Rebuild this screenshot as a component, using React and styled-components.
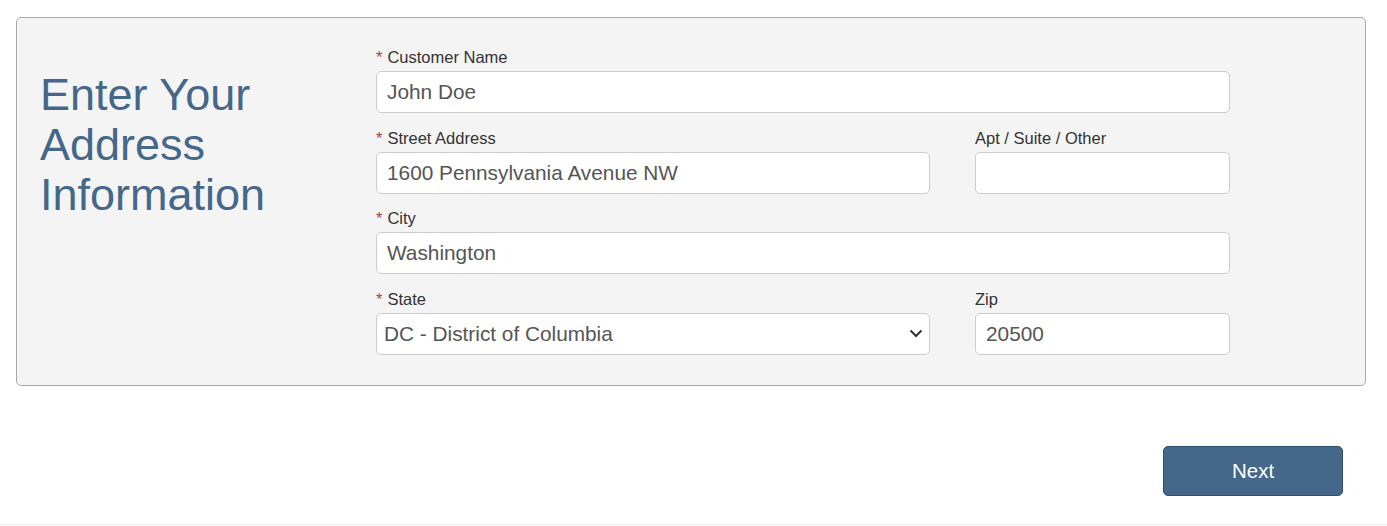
import React from "react";
import styled, { createGlobalStyle } from "styled-components";

const Global = createGlobalStyle`
  html, body { margin: 0; padding: 0; background: #fff; }
  body { font-family: "Liberation Sans", Arial, sans-serif; }
  * { box-sizing: border-box; }
`;

const Page = styled.div`
  width: 1387px;
  height: 526px;
  padding: 17px 21px 0 16px;
  display: flex;
  flex-direction: column;
`;

const Panel = styled.section`
  height: 369px;
  background: #f4f4f4;
  border: 1px solid #a9a9a9;
  border-radius: 5px;
  display: flex;
  padding: 30px 0 0 0;
`;

const Intro = styled.div`
  width: 359px;
  padding: 22px 0 0 23px;
`;

const Heading = styled.h1`
  margin: 0;
  font-weight: 400;
  font-size: 45px;
  line-height: 50px;
  color: #44678a;
  width: 300px;
`;

const Fields = styled.div`
  width: 854px;
  display: flex;
  flex-direction: column;
  gap: 15.67px;
`;

const Row = styled.div`
  display: flex;
  gap: 45px;
`;

const Field = styled.div`
  flex: ${(p) => (p.$w ? `0 0 ${p.$w}px` : "1 1 auto")};
  display: flex;
  flex-direction: column;
`;

const Label = styled.label`
  font-size: 16.5px;
  line-height: 18px;
  color: #333;
  margin-bottom: 5px;
  height: 18px;
`;

const Star = styled.span`
  color: #a94442;
  margin-right: 5px;
`;

const Input = styled.input`
  height: 42px;
  width: 100%;
  border: 1px solid #cccccc;
  border-radius: 5px;
  background: #fff;
  padding: 0 10px;
  font-family: "Liberation Sans", Arial, sans-serif;
  font-size: 20.8px;
  color: #555;
  outline: none;
`;

const SelectWrap = styled.div`
  position: relative;
  height: 42px;
`;

const Select = styled.select`
  appearance: none;
  -webkit-appearance: none;
  height: 42px;
  width: 100%;
  border: 1px solid #cccccc;
  border-radius: 5px;
  background: #fff;
  padding: 0 40px 0 7px;
  font-family: "Liberation Sans", Arial, sans-serif;
  font-size: 20.8px;
  color: #555;
  outline: none;
`;

const Chevron = styled.svg`
  position: absolute;
  right: 7px;
  top: 15px;
  pointer-events: none;
`;

const Actions = styled.div`
  display: flex;
  justify-content: flex-end;
  padding: 60px 23px 0 0;
  height: 138px;
`;

const Button = styled.button`
  width: 180px;
  height: 50px;
  background: #44678a;
  border: 1px solid #2e4e6e;
  border-radius: 5px;
  color: #fff;
  font-family: "Liberation Sans", Arial, sans-serif;
  font-size: 20.5px;
  cursor: pointer;
`;

const Footer = styled.div`
  margin: 0 -21px 0 -16px;
  border-top: 1px solid #e8e8e8;
`;

const TextField = ({ label, required, value, w }) => (
  <Field $w={w}>
    <Label>
      {required && <Star>*</Star>}
      {label}
    </Label>
    <Input defaultValue={value} />
  </Field>
);

export default function App() {
  return (
    <>
      <Global />
      <Page>
        <Panel>
          <Intro>
            <Heading>Enter Your Address Information</Heading>
          </Intro>
          <Fields>
            <Row>
              <TextField label="Customer Name" required value="John Doe" />
            </Row>
            <Row>
              <TextField label="Street Address" required value="1600 Pennsylvania Avenue NW" />
              <TextField label="Apt / Suite / Other" value="" w={255} />
            </Row>
            <Row>
              <TextField label="City" required value="Washington" />
            </Row>
            <Row>
              <Field>
                <Label>
                  <Star>*</Star>State
                </Label>
                <SelectWrap>
                  <Select defaultValue="DC">
                    <option value="DC">DC - District of Columbia</option>
                  </Select>
                  <Chevron width="14" height="10" viewBox="0 0 14 10">
                    <path d="M1.5 2.5 L7 8 L12.5 2.5" fill="none" stroke="#333" strokeWidth="2" />
                  </Chevron>
                </SelectWrap>
              </Field>
              <TextField label="Zip" value="20500" w={255} />
            </Row>
          </Fields>
        </Panel>
        <Actions>
          <Button>Next</Button>
        </Actions>
        <Footer />
      </Page>
    </>
  );
}
